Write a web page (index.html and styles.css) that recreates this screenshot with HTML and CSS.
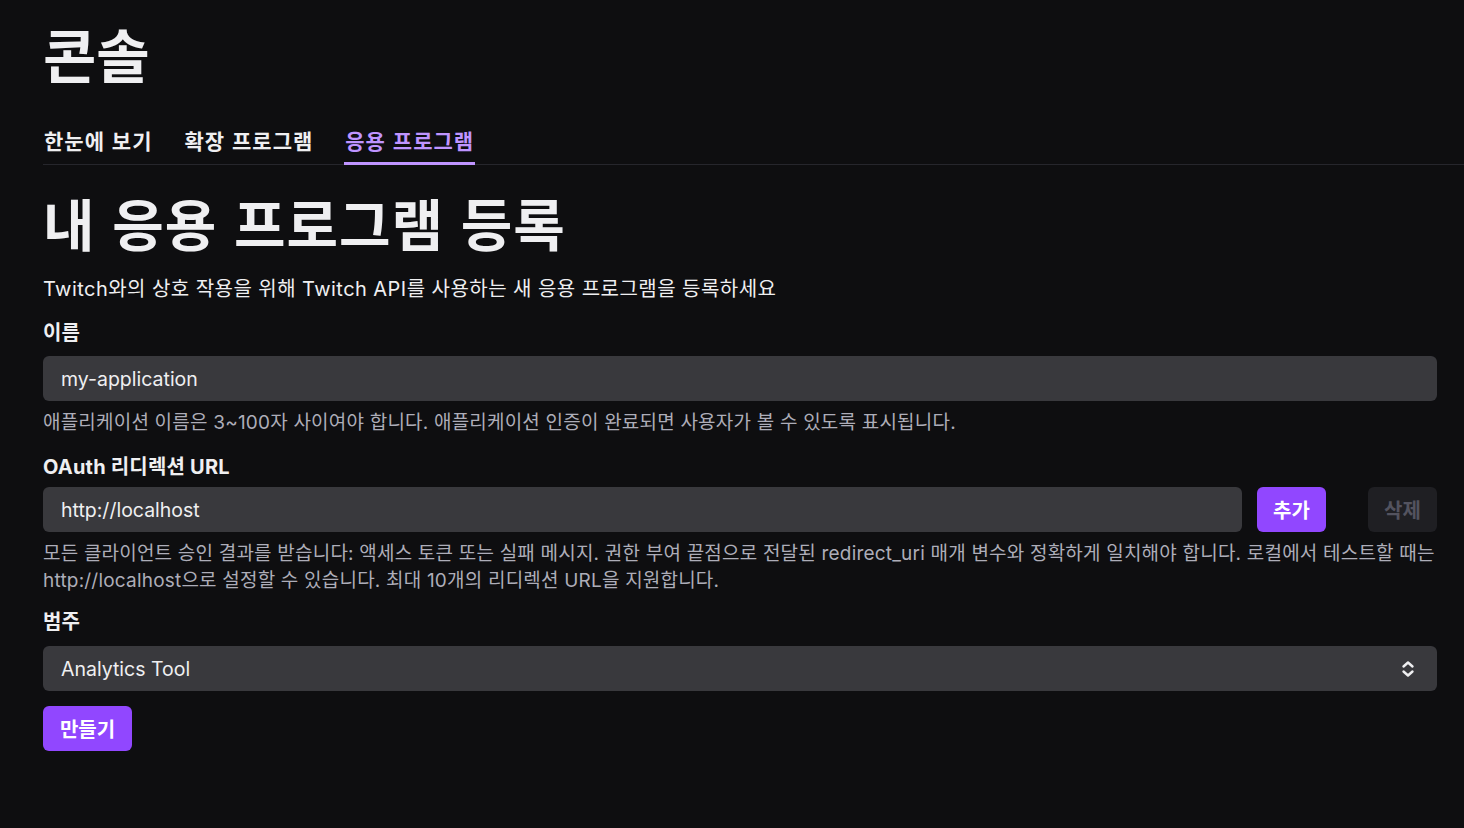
FILE: index.html
```html
<!DOCTYPE html>
<html lang="ko">
<head>
<meta charset="utf-8">
<title>콘솔</title>
<link rel="stylesheet" href="styles.css">
</head>
<body>
<div class="page">
  <h1 class="console-title">콘솔</h1>
  <nav class="tabs">
    <a class="tab">한눈에 보기</a>
    <a class="tab">확장 프로그램</a>
    <a class="tab active">응용 프로그램</a>
  </nav>
  <main class="content">
    <h2 class="heading">내 응용 프로그램 등록</h2>
    <p class="intro">Twitch와의 상호 작용을 위해 Twitch API를 사용하는 새 응용 프로그램을 등록하세요</p>

    <div class="field first">
      <label class="label">이름</label>
      <div class="input">my-application</div>
      <p class="help">애플리케이션 이름은 3~100자 사이여야 합니다. 애플리케이션 인증이 완료되면 사용자가 볼 수 있도록 표시됩니다.</p>
    </div>

    <div class="field">
      <label class="label tight">OAuth 리디렉션 URL</label>
      <div class="url-row">
        <div class="input grow">http://localhost</div>
        <button class="btn primary small">추가</button>
        <button class="btn disabled small">삭제</button>
      </div>
      <p class="help">모든 클라이언트 승인 결과를 받습니다: 액세스 토큰 또는 실패 메시지. 권한 부여 끝점으로 전달된 redirect_uri 매개 변수와 정확하게 일치해야 합니다. 로컬에서 테스트할 때는 http://localhost으로 설정할 수 있습니다. 최대 10개의 리디렉션 URL을 지원합니다.</p>
    </div>

    <div class="field cat">
      <label class="label wide">범주</label>
      <div class="input select">
        <span>Analytics Tool</span>
        <svg class="chev" width="14" height="18" viewBox="0 0 14 18" fill="none" stroke="#efeff1" stroke-width="2.4" stroke-linecap="round" stroke-linejoin="round"><path d="M2.5 6.5 L7 2.5 L11.5 6.5"/><path d="M2.5 11.5 L7 15.5 L11.5 11.5"/></svg>
      </div>
    </div>

    <button class="btn primary create">만들기</button>
  </main>
</div>
</body>
</html>
```
FILE: styles.css
```css
* { box-sizing: border-box; }
html, body {
  margin: 0;
  padding: 0;
  background: #0e0e10;
  color: #efeff1;
  font-family: Inter, "Noto Sans CJK KR", sans-serif;
}
.page {
  padding: 17px 0 0 43px;
}
.console-title {
  margin: 0;
  font-family: "Noto Sans CJK KR", sans-serif;
  font-weight: 700;
  font-size: 58px;
  line-height: 72px;
  color: #efeff1;
}
.tabs {
  display: flex;
  gap: 30px;
  margin-top: 37px;
  border-bottom: 1px solid #26262c;
}
.tab {
  font-family: "Noto Sans CJK KR", sans-serif;
  font-weight: 700;
  font-size: 21px;
  letter-spacing: 1px;
  line-height: 28px;
  padding: 0 1px 8px;
  color: #efeff1;
  border-bottom: 3px solid transparent;
  margin-bottom: -1px;
}
.tab.active {
  color: #bf94ff;
  border-bottom-color: #bf94ff;
}
.content {
  padding-right: 27px;
}
.heading {
  margin: 22px 0 0;
  font-family: "Noto Sans CJK KR", sans-serif;
  font-weight: 700;
  font-size: 56px;
  line-height: 70px;
  letter-spacing: 1px;
}
.intro {
  margin: 18px 0 0;
  font-size: 20px;
  letter-spacing: 0.45px;
  line-height: 28px;
}
.field { margin-top: 18px; }
.field.first { margin-top: 17px; }
.label {
  display: block;
  font-weight: 700;
  font-size: 20px;
  letter-spacing: 0.2px;
  line-height: 26px;
  margin-bottom: 10px;
}
.label.tight { margin-bottom: 7px; }
.label.wide { margin-bottom: 11px; }
.input {
  height: 45px;
  background: #39393d;
  border-radius: 6px;
  padding: 0 18px;
  display: flex;
  align-items: center;
  font-size: 19.5px;
  color: #efeff1;
}
.help {
  margin: 8px 0 0;
  font-size: 19px;
  letter-spacing: 0.2px;
  line-height: 27px;
  color: #adadb8;
}
.url-row {
  display: flex;
  gap: 15px;
}
.grow { flex: 1; }
.btn {
  height: 45px;
  border: 0;
  border-radius: 6px;
  padding: 0;
  font-family: "Noto Sans CJK KR", sans-serif;
  font-weight: 700;
  font-size: 20px;
  cursor: pointer;
}
.btn.small { width: 69px; }
.btn.primary {
  background: #9147ff;
  color: #fff;
}
.btn.disabled {
  background: #1f1f23;
  color: #53535f;
  margin-left: 27px;
}
.field.cat { margin-top: 15px; }
.select {
  justify-content: space-between;
  padding-right: 22px;
}
.chev { display: block; }
.create {
  margin-top: 15px;
  width: 89px;
}
```
